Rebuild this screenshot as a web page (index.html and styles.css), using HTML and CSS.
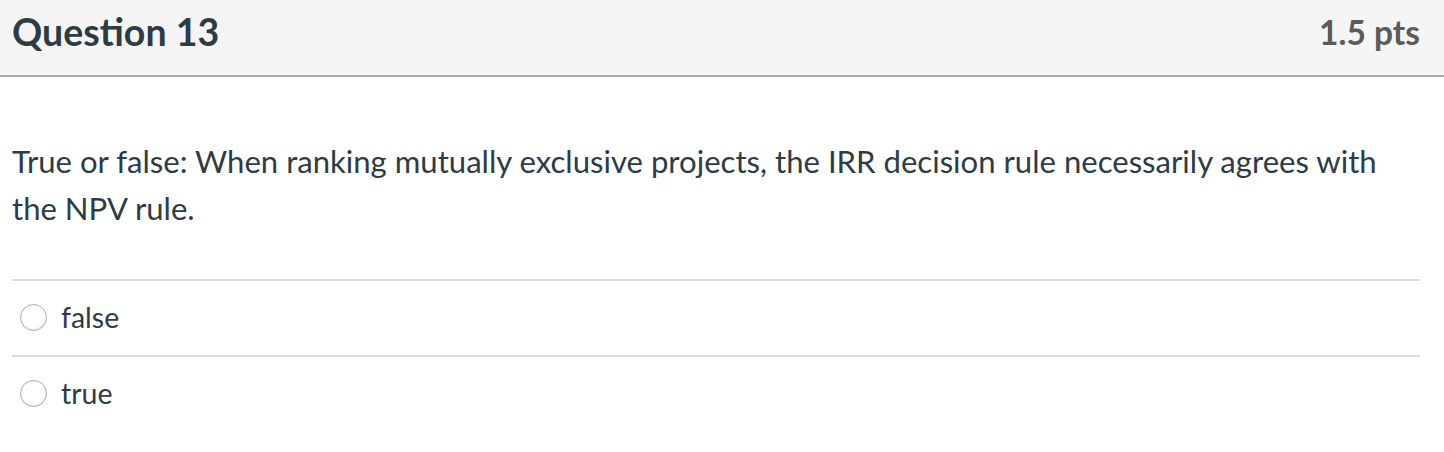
FILE: index.html
```html
<!DOCTYPE html>
<html>
<head>
<meta charset="utf-8">
<link rel="stylesheet" href="styles.css">
</head>
<body>
<div class="question">
  <div class="header">
    <span class="title">Question 13</span>
    <span class="pts">1.5 pts</span>
  </div>
  <div class="content">
    <div class="text">True or false: When ranking mutually exclusive projects, the IRR decision rule necessarily agrees with the NPV rule.</div>
    <div class="answers">
      <label class="answer"><span class="radio"></span><span class="label">false</span></label>
      <label class="answer"><span class="radio"></span><span class="label">true</span></label>
    </div>
  </div>
</div>
</body>
</html>
```
FILE: styles.css
```css
html, body {
  margin: 0;
  padding: 0;
  background: #fff;
}
body {
  font-family: Lato, "Open Sans", sans-serif;
  color: #2d3b45;
  width: 1444px;
  height: 452px;
  overflow: hidden;
}
.header {
  display: flex;
  justify-content: space-between;
  align-items: center;
  background: #f5f5f5;
  border-bottom: 2px solid #a8a8a8;
  padding: 0 24px 12px 12px;
  box-sizing: border-box;
  height: 77px;
}
.title {
  font-size: 37.5px;
  font-weight: 700;
  color: #2d3b45;
}
.pts {
  font-size: 33.5px;
  font-weight: 700;
  color: #5b5b5b;
}
.content {
  padding: 0 24px 0 12px;
}
.text {
  font-size: 31.1px;
  line-height: 47px;
  padding-top: 61px;
  padding-bottom: 47px;
  margin-right: 10px;
}
.answers {
  border-top: 2px solid #dcdcdc;
}
.answer {
  display: flex;
  align-items: center;
  height: 74px;
  border-bottom: 2px solid #dcdcdc;
}
.answer:last-child {
  border-bottom: none;
}
.radio {
  width: 25px;
  height: 25px;
  border-radius: 50%;
  border: 1px solid #a9a9a9;
  box-shadow: inset 0 -1px 2px rgba(0,0,0,0.1);
  background: #fff;
  margin-left: 8px;
  margin-right: 14px;
  margin-top: -2px;
}
.label {
  font-size: 28.5px;
  margin-top: -3px;
}
```
